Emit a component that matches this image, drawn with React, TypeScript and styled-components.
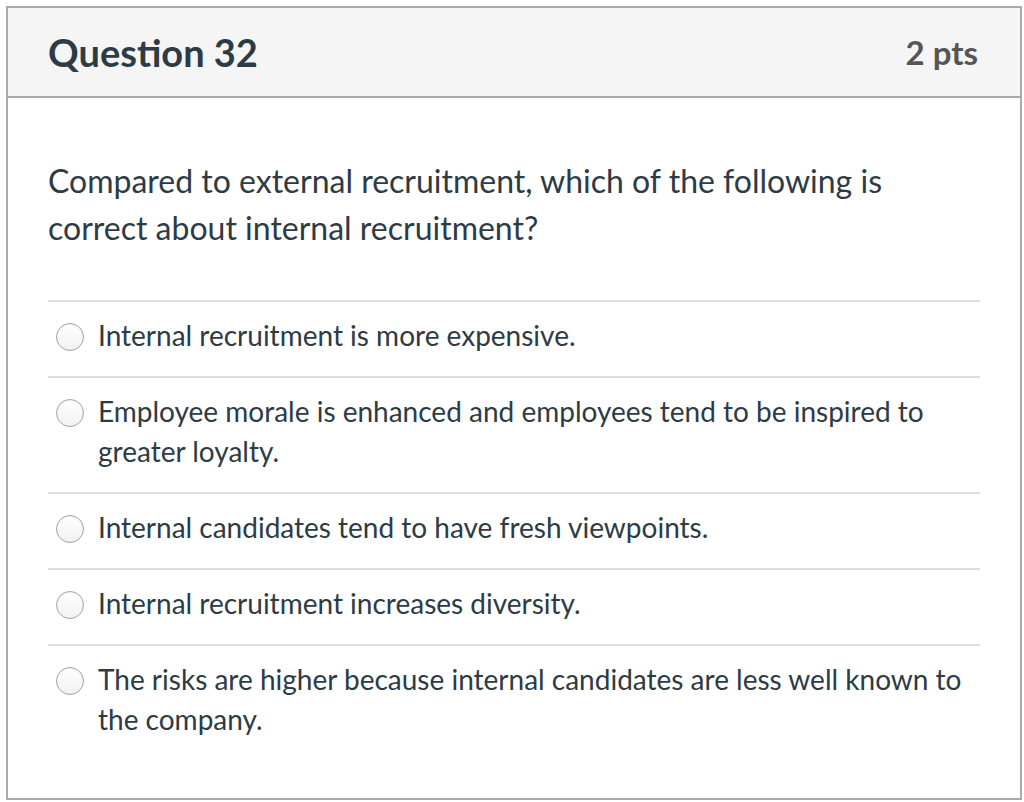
import React from "react";
import styled, { createGlobalStyle } from "styled-components";

const GlobalStyle = createGlobalStyle`
  html, body {
    margin: 0;
    padding: 0;
    background: #ffffff;
  }
  body {
    font-family: Lato, "Open Sans", "Liberation Sans", sans-serif;
    color: #2d3b45;
  }
`;

type AnswerType = {
  id: number;
  text: string;
};

const answers: AnswerType[] = [
  { id: 1, text: "Internal recruitment is more expensive." },
  {
    id: 2,
    text: "Employee morale is enhanced and employees tend to be inspired to greater loyalty.",
  },
  { id: 3, text: "Internal candidates tend to have fresh viewpoints." },
  { id: 4, text: "Internal recruitment increases diversity." },
  {
    id: 5,
    text: "The risks are higher because internal candidates are less well known to the company.",
  },
];

const Page = styled.div`
  padding: 6px 2px 2px 6px;
`;

const QuestionCard = styled.div`
  width: 1016px;
  height: 794px;
  box-sizing: border-box;
  border: 2px solid #a9a9a9;
  display: flex;
  flex-direction: column;
`;

const Header = styled.div`
  height: 88px;
  background: #f5f5f5;
  border-bottom: 2px solid #a9a9a9;
  display: flex;
  align-items: center;
  justify-content: space-between;
  padding: 0 42px 0 40px;
`;

const Title = styled.h2`
  margin: 0;
  font-size: 38px;
  font-weight: 700;
  color: #2d3b45;
`;

const Points = styled.span`
  font-size: 33px;
  font-weight: 700;
  color: #555555;
`;

const Body = styled.div`
  padding: 59px 40px 0 40px;
`;

const QuestionText = styled.p`
  margin: 0 0 49px 0;
  font-size: 32px;
  line-height: 47px;
  color: #2d3b45;
`;

const AnswerList = styled.div`
  display: flex;
  flex-direction: column;
`;

const AnswerRow = styled.label`
  display: flex;
  align-items: flex-start;
  gap: 14px;
  border-top: 2px solid #dddddd;
  padding: 13px 0 21px 8px;
  cursor: pointer;
`;

const Radio = styled.span`
  flex: none;
  box-sizing: border-box;
  width: 28px;
  height: 28px;
  margin-top: 8px;
  border-radius: 50%;
  border: 1px solid #a3a3a3;
  background: linear-gradient(#ffffff, #f2f2f2);
  box-shadow: inset 0 1px 1px rgba(0, 0, 0, 0.06);
`;

const AnswerText = styled.span`
  font-size: 28px;
  line-height: 40px;
  color: #2d3b45;
`;

export default function App() {
  return (
    <>
      <GlobalStyle />
      <Page>
        <QuestionCard>
          <Header>
            <Title>Question 32</Title>
            <Points>2 pts</Points>
          </Header>
          <Body>
            <QuestionText>
              Compared to external recruitment, which of the following is
              <br />
              correct about internal recruitment?
            </QuestionText>
            <AnswerList>
              {answers.map((a) => (
                <AnswerRow key={a.id}>
                  <Radio />
                  <AnswerText>{a.text}</AnswerText>
                </AnswerRow>
              ))}
            </AnswerList>
          </Body>
        </QuestionCard>
      </Page>
    </>
  );
}
